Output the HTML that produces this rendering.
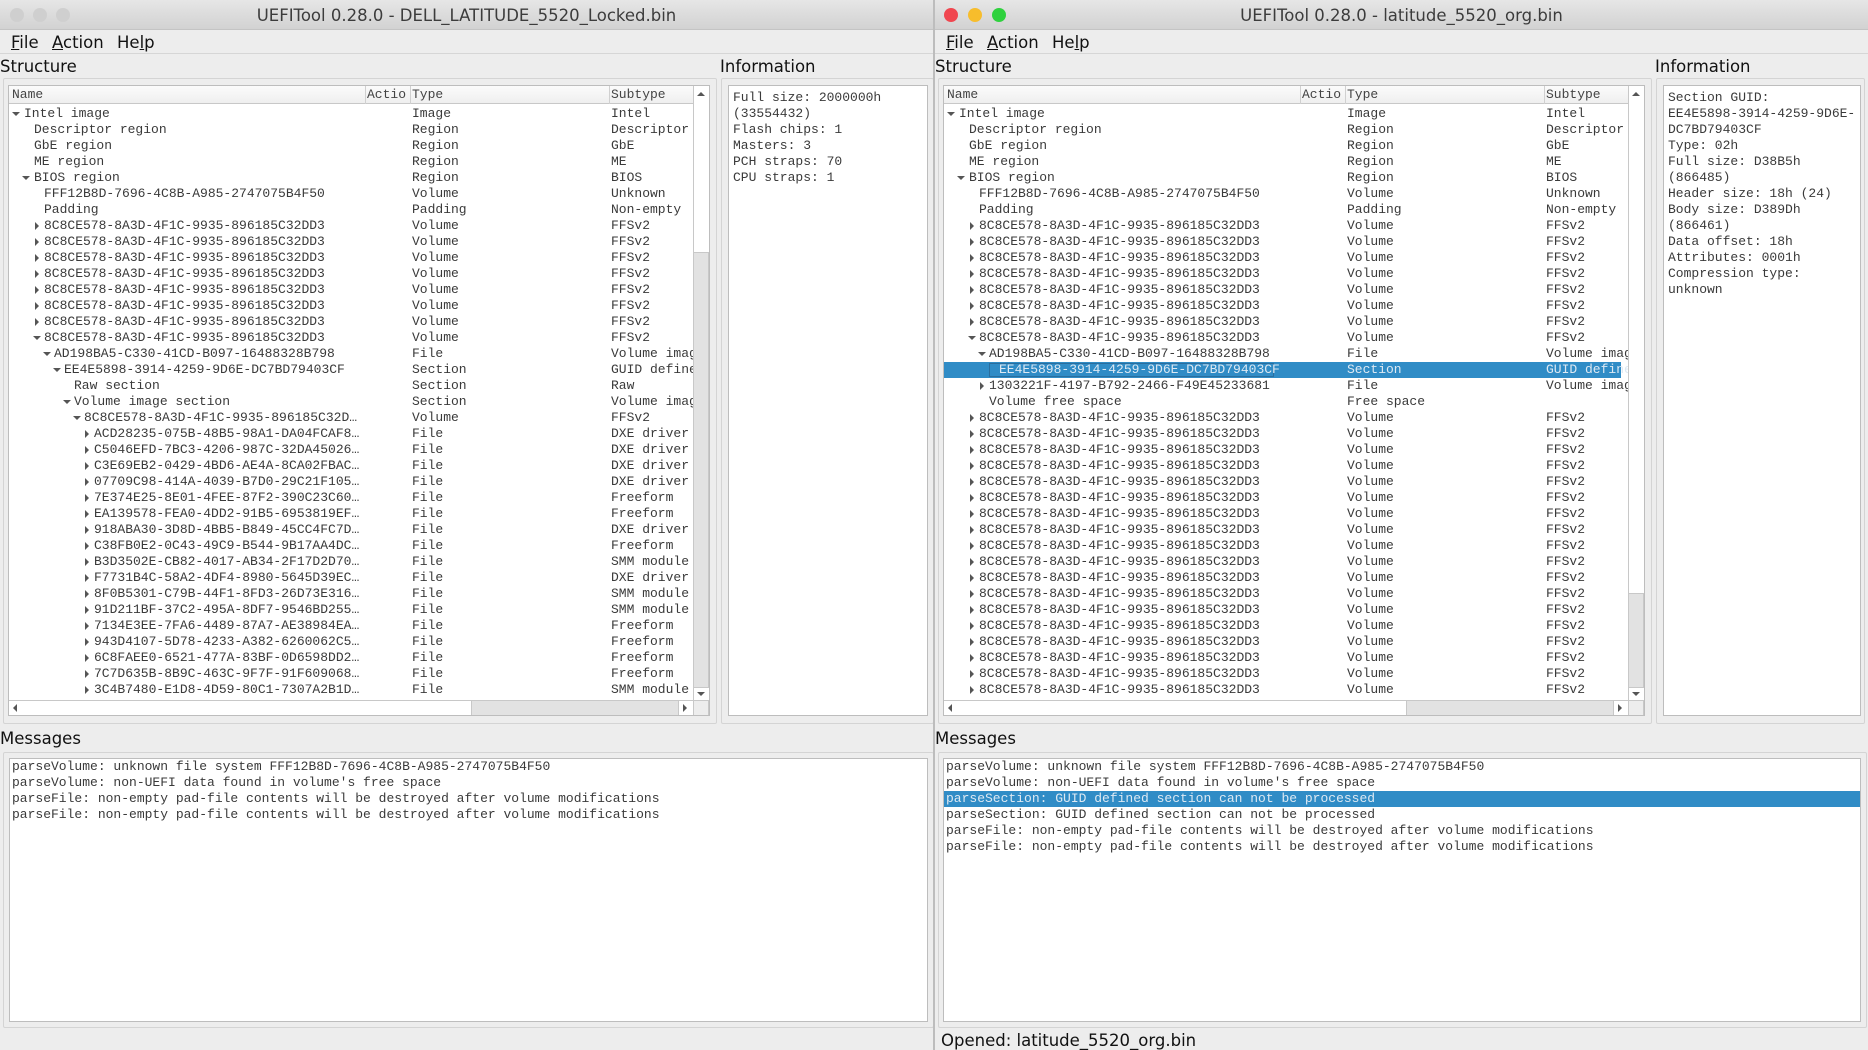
<!DOCTYPE html>
<html><head><meta charset="utf-8"><style>
*{margin:0;padding:0;box-sizing:border-box}
body{width:1868px;height:1050px;background:#ededed;position:relative;overflow:hidden;font-family:"DejaVu Sans","Liberation Sans",sans-serif;color:#111}
.win{position:absolute;top:0;width:933px;height:1050px;background:#ededed;overflow:hidden}
.tb{position:absolute;left:0;top:0;width:100%;height:30px;background:linear-gradient(#e6e6e6,#d2d2d2);border-bottom:1px solid #c4c4c4}
.tt{position:absolute;top:6px;width:100%;text-align:center;font-size:16.5px;color:#3c3c3c}
.dot{position:absolute;top:8px;width:14px;height:14px;border-radius:50%}
.mb{position:absolute;top:30px;left:0;width:100%;height:24px;border-bottom:1px solid #d6d6d6;font-size:16.5px}
.mb span{position:absolute;top:3px}
.lbl{position:absolute;font-size:16.5px;top:57px}
.frame{position:absolute;border:1px solid #d4d4d4;border-radius:2px}
.box{position:absolute;background:#fff;border:1px solid #bdbdbd;overflow:hidden;font-family:"Liberation Mono",monospace;font-size:13px;color:#3a3a3a}
.hd{position:absolute;left:0;top:0;height:18px;width:100%;background:linear-gradient(#fbfbfb,#efefef);border-bottom:1px solid #c8c8c8}
.hd span{position:absolute;top:1px;line-height:16px;color:#444}
.hs{position:absolute;top:0;width:1px;height:18px;background:#d0d0d0}
.r{position:absolute;left:0;height:16px;line-height:16px;white-space:pre;width:677px}
.r span{position:absolute;top:0}
.ar{position:absolute;top:4px;width:0;height:0;border-top:4px solid transparent;border-bottom:4px solid transparent;border-left:4px solid #555}
.ad{position:absolute;top:6px;width:0;height:0;border-left:4px solid transparent;border-right:4px solid transparent;border-top:4px solid #555}
.sel{background:#308cc6;color:#dde9f3}
.info{position:absolute;white-space:pre;line-height:16px}
.m{position:absolute;left:0;width:100%;height:16px;line-height:16px;white-space:pre;padding-left:2px}
</style></head><body>

<!-- LEFT WINDOW -->
<div class="win" style="left:0">
<div class="tb"><div class="dot" style="left:10px;background:#cfcfcf"></div><div class="dot" style="left:33px;background:#cfcfcf"></div><div class="dot" style="left:56px;background:#cfcfcf"></div>
<div class="tt">UEFITool 0.28.0 - DELL_LATITUDE_5520_Locked.bin</div></div>
<div class="mb"><span style="left:11px"><u>F</u>ile</span><span style="left:52px"><u>A</u>ction</span><span style="left:117px">He<u>l</u>p</span></div>
<div class="lbl" style="left:0">Structure</div>
<div class="lbl" style="left:720px">Information</div>
<div class="frame" style="left:3px;top:78px;width:714px;height:646px"></div>
<div class="frame" style="left:721px;top:78px;width:213px;height:646px"></div>
<div class="box" style="left:8px;top:85px;width:702px;height:631px">
<div class="hd"><span style="left:3px">Name</span><span style="left:358px">Actio</span><span style="left:403px">Type</span><span style="left:602px">Subtype</span>
<div class="hs" style="left:356px"></div><div class="hs" style="left:401px"></div><div class="hs" style="left:600px"></div></div>
<div class="r" style="top:20px"><i class="ad" style="left:3px"></i><span style="left:15px">Intel image</span><span style="left:403px">Image</span><span style="left:602px">Intel</span></div>
<div class="r" style="top:36px"><span style="left:25px">Descriptor region</span><span style="left:403px">Region</span><span style="left:602px">Descriptor</span></div>
<div class="r" style="top:52px"><span style="left:25px">GbE region</span><span style="left:403px">Region</span><span style="left:602px">GbE</span></div>
<div class="r" style="top:68px"><span style="left:25px">ME region</span><span style="left:403px">Region</span><span style="left:602px">ME</span></div>
<div class="r" style="top:84px"><i class="ad" style="left:13px"></i><span style="left:25px">BIOS region</span><span style="left:403px">Region</span><span style="left:602px">BIOS</span></div>
<div class="r" style="top:100px"><span style="left:35px">FFF12B8D-7696-4C8B-A985-2747075B4F50</span><span style="left:403px">Volume</span><span style="left:602px">Unknown</span></div>
<div class="r" style="top:116px"><span style="left:35px">Padding</span><span style="left:403px">Padding</span><span style="left:602px">Non-empty</span></div>
<div class="r" style="top:132px"><i class="ar" style="left:26px"></i><span style="left:35px">8C8CE578-8A3D-4F1C-9935-896185C32DD3</span><span style="left:403px">Volume</span><span style="left:602px">FFSv2</span></div>
<div class="r" style="top:148px"><i class="ar" style="left:26px"></i><span style="left:35px">8C8CE578-8A3D-4F1C-9935-896185C32DD3</span><span style="left:403px">Volume</span><span style="left:602px">FFSv2</span></div>
<div class="r" style="top:164px"><i class="ar" style="left:26px"></i><span style="left:35px">8C8CE578-8A3D-4F1C-9935-896185C32DD3</span><span style="left:403px">Volume</span><span style="left:602px">FFSv2</span></div>
<div class="r" style="top:180px"><i class="ar" style="left:26px"></i><span style="left:35px">8C8CE578-8A3D-4F1C-9935-896185C32DD3</span><span style="left:403px">Volume</span><span style="left:602px">FFSv2</span></div>
<div class="r" style="top:196px"><i class="ar" style="left:26px"></i><span style="left:35px">8C8CE578-8A3D-4F1C-9935-896185C32DD3</span><span style="left:403px">Volume</span><span style="left:602px">FFSv2</span></div>
<div class="r" style="top:212px"><i class="ar" style="left:26px"></i><span style="left:35px">8C8CE578-8A3D-4F1C-9935-896185C32DD3</span><span style="left:403px">Volume</span><span style="left:602px">FFSv2</span></div>
<div class="r" style="top:228px"><i class="ar" style="left:26px"></i><span style="left:35px">8C8CE578-8A3D-4F1C-9935-896185C32DD3</span><span style="left:403px">Volume</span><span style="left:602px">FFSv2</span></div>
<div class="r" style="top:244px"><i class="ad" style="left:24px"></i><span style="left:35px">8C8CE578-8A3D-4F1C-9935-896185C32DD3</span><span style="left:403px">Volume</span><span style="left:602px">FFSv2</span></div>
<div class="r" style="top:260px"><i class="ad" style="left:34px"></i><span style="left:45px">AD198BA5-C330-41CD-B097-16488328B798</span><span style="left:403px">File</span><span style="left:602px">Volume image</span></div>
<div class="r" style="top:276px"><i class="ad" style="left:44px"></i><span style="left:55px">EE4E5898-3914-4259-9D6E-DC7BD79403CF</span><span style="left:403px">Section</span><span style="left:602px">GUID defined</span></div>
<div class="r" style="top:292px"><span style="left:65px">Raw section</span><span style="left:403px">Section</span><span style="left:602px">Raw</span></div>
<div class="r" style="top:308px"><i class="ad" style="left:54px"></i><span style="left:65px">Volume image section</span><span style="left:403px">Section</span><span style="left:602px">Volume image</span></div>
<div class="r" style="top:324px"><i class="ad" style="left:64px"></i><span style="left:75px">8C8CE578-8A3D-4F1C-9935-896185C32D…</span><span style="left:403px">Volume</span><span style="left:602px">FFSv2</span></div>
<div class="r" style="top:340px"><i class="ar" style="left:76px"></i><span style="left:85px">ACD28235-075B-48B5-98A1-DA04FCAF8…</span><span style="left:403px">File</span><span style="left:602px">DXE driver</span></div>
<div class="r" style="top:356px"><i class="ar" style="left:76px"></i><span style="left:85px">C5046EFD-7BC3-4206-987C-32DA45026…</span><span style="left:403px">File</span><span style="left:602px">DXE driver</span></div>
<div class="r" style="top:372px"><i class="ar" style="left:76px"></i><span style="left:85px">C3E69EB2-0429-4BD6-AE4A-8CA02FBAC…</span><span style="left:403px">File</span><span style="left:602px">DXE driver</span></div>
<div class="r" style="top:388px"><i class="ar" style="left:76px"></i><span style="left:85px">07709C98-414A-4039-B7D0-29C21F105…</span><span style="left:403px">File</span><span style="left:602px">DXE driver</span></div>
<div class="r" style="top:404px"><i class="ar" style="left:76px"></i><span style="left:85px">7E374E25-8E01-4FEE-87F2-390C23C60…</span><span style="left:403px">File</span><span style="left:602px">Freeform</span></div>
<div class="r" style="top:420px"><i class="ar" style="left:76px"></i><span style="left:85px">EA139578-FEA0-4DD2-91B5-6953819EF…</span><span style="left:403px">File</span><span style="left:602px">Freeform</span></div>
<div class="r" style="top:436px"><i class="ar" style="left:76px"></i><span style="left:85px">918ABA30-3D8D-4BB5-B849-45CC4FC7D…</span><span style="left:403px">File</span><span style="left:602px">DXE driver</span></div>
<div class="r" style="top:452px"><i class="ar" style="left:76px"></i><span style="left:85px">C38FB0E2-0C43-49C9-B544-9B17AA4DC…</span><span style="left:403px">File</span><span style="left:602px">Freeform</span></div>
<div class="r" style="top:468px"><i class="ar" style="left:76px"></i><span style="left:85px">B3D3502E-CB82-4017-AB34-2F17D2D70…</span><span style="left:403px">File</span><span style="left:602px">SMM module</span></div>
<div class="r" style="top:484px"><i class="ar" style="left:76px"></i><span style="left:85px">F7731B4C-58A2-4DF4-8980-5645D39EC…</span><span style="left:403px">File</span><span style="left:602px">DXE driver</span></div>
<div class="r" style="top:500px"><i class="ar" style="left:76px"></i><span style="left:85px">8F0B5301-C79B-44F1-8FD3-26D73E316…</span><span style="left:403px">File</span><span style="left:602px">SMM module</span></div>
<div class="r" style="top:516px"><i class="ar" style="left:76px"></i><span style="left:85px">91D211BF-37C2-495A-8DF7-9546BD255…</span><span style="left:403px">File</span><span style="left:602px">SMM module</span></div>
<div class="r" style="top:532px"><i class="ar" style="left:76px"></i><span style="left:85px">7134E3EE-7FA6-4489-87A7-AE38984EA…</span><span style="left:403px">File</span><span style="left:602px">Freeform</span></div>
<div class="r" style="top:548px"><i class="ar" style="left:76px"></i><span style="left:85px">943D4107-5D78-4233-A382-6260062C5…</span><span style="left:403px">File</span><span style="left:602px">Freeform</span></div>
<div class="r" style="top:564px"><i class="ar" style="left:76px"></i><span style="left:85px">6C8FAEE0-6521-477A-83BF-0D6598DD2…</span><span style="left:403px">File</span><span style="left:602px">Freeform</span></div>
<div class="r" style="top:580px"><i class="ar" style="left:76px"></i><span style="left:85px">7C7D635B-8B9C-463C-9F7F-91F609068…</span><span style="left:403px">File</span><span style="left:602px">Freeform</span></div>
<div class="r" style="top:596px"><i class="ar" style="left:76px"></i><span style="left:85px">3C4B7480-E1D8-4D59-80C1-7307A2B1D…</span><span style="left:403px">File</span><span style="left:602px">SMM module</span></div>
<div style="position:absolute;left:684px;top:0;width:16px;height:614px;background:#fff;border-left:1px solid #c8c8c8"></div>
<div style="position:absolute;left:684px;top:166px;width:16px;height:436px;background:#e2e2e2;border:1px solid #c8c8c8"></div>
<div style="position:absolute;left:688px;top:6px;border-left:4px solid transparent;border-right:4px solid transparent;border-bottom:4px solid #555"></div>
<div style="position:absolute;left:688px;top:606px;border-left:4px solid transparent;border-right:4px solid transparent;border-top:4px solid #555"></div>
<div style="position:absolute;left:0;top:614px;width:700px;height:16px;background:#fff;border-top:1px solid #c8c8c8"></div>
<div style="position:absolute;left:462px;top:614px;width:208px;height:16px;background:#e2e2e2;border:1px solid #c8c8c8"></div>
<div style="position:absolute;left:684px;top:614px;width:16px;height:16px;background:#ededed;border:1px solid #c8c8c8"></div>
<div style="position:absolute;left:4px;top:618px;border-top:4px solid transparent;border-bottom:4px solid transparent;border-right:4px solid #555"></div>
<div style="position:absolute;left:674px;top:618px;border-top:4px solid transparent;border-bottom:4px solid transparent;border-left:4px solid #555"></div>
</div>
<div class="box" style="left:728px;top:85px;width:200px;height:631px">
<div class="info" style="left:4px;top:4px">Full size: 2000000h
(33554432)
Flash chips: 1
Masters: 3
PCH straps: 70
CPU straps: 1</div></div>
<div class="lbl" style="left:0;top:729px">Messages</div>
<div class="frame" style="left:3px;top:752px;width:931px;height:276px"></div>
<div class="box" style="left:9px;top:758px;width:919px;height:264px">
<div class="m" style="top:0">parseVolume: unknown file system FFF12B8D-7696-4C8B-A985-2747075B4F50</div>
<div class="m" style="top:16px">parseVolume: non-UEFI data found in volume's free space</div>
<div class="m" style="top:32px">parseFile: non-empty pad-file contents will be destroyed after volume modifications</div>
<div class="m" style="top:48px">parseFile: non-empty pad-file contents will be destroyed after volume modifications</div>
</div>
</div>
<div style="position:absolute;left:933px;top:0;width:2px;height:1050px;background:#bdbdbd"></div>

<!-- RIGHT WINDOW -->
<div class="win" style="left:935px">
<div class="tb"><div class="dot" style="left:9px;background:#f0464f"></div><div class="dot" style="left:33px;background:#f7bd2c"></div><div class="dot" style="left:57px;background:#2fd13e"></div>
<div class="tt">UEFITool 0.28.0 - latitude_5520_org.bin</div></div>
<div class="mb"><span style="left:11px"><u>F</u>ile</span><span style="left:52px"><u>A</u>ction</span><span style="left:117px">He<u>l</u>p</span></div>
<div class="lbl" style="left:0">Structure</div>
<div class="lbl" style="left:720px">Information</div>
<div class="frame" style="left:3px;top:78px;width:714px;height:646px"></div>
<div class="frame" style="left:721px;top:78px;width:209px;height:646px"></div>
<div class="box" style="left:8px;top:85px;width:702px;height:631px">
<div class="hd"><span style="left:3px">Name</span><span style="left:358px">Actio</span><span style="left:403px">Type</span><span style="left:602px">Subtype</span>
<div class="hs" style="left:356px"></div><div class="hs" style="left:401px"></div><div class="hs" style="left:600px"></div></div>
<div class="r" style="top:20px"><i class="ad" style="left:3px"></i><span style="left:15px">Intel image</span><span style="left:403px">Image</span><span style="left:602px">Intel</span></div>
<div class="r" style="top:36px"><span style="left:25px">Descriptor region</span><span style="left:403px">Region</span><span style="left:602px">Descriptor</span></div>
<div class="r" style="top:52px"><span style="left:25px">GbE region</span><span style="left:403px">Region</span><span style="left:602px">GbE</span></div>
<div class="r" style="top:68px"><span style="left:25px">ME region</span><span style="left:403px">Region</span><span style="left:602px">ME</span></div>
<div class="r" style="top:84px"><i class="ad" style="left:13px"></i><span style="left:25px">BIOS region</span><span style="left:403px">Region</span><span style="left:602px">BIOS</span></div>
<div class="r" style="top:100px"><span style="left:35px">FFF12B8D-7696-4C8B-A985-2747075B4F50</span><span style="left:403px">Volume</span><span style="left:602px">Unknown</span></div>
<div class="r" style="top:116px"><span style="left:35px">Padding</span><span style="left:403px">Padding</span><span style="left:602px">Non-empty</span></div>
<div class="r" style="top:132px"><i class="ar" style="left:26px"></i><span style="left:35px">8C8CE578-8A3D-4F1C-9935-896185C32DD3</span><span style="left:403px">Volume</span><span style="left:602px">FFSv2</span></div>
<div class="r" style="top:148px"><i class="ar" style="left:26px"></i><span style="left:35px">8C8CE578-8A3D-4F1C-9935-896185C32DD3</span><span style="left:403px">Volume</span><span style="left:602px">FFSv2</span></div>
<div class="r" style="top:164px"><i class="ar" style="left:26px"></i><span style="left:35px">8C8CE578-8A3D-4F1C-9935-896185C32DD3</span><span style="left:403px">Volume</span><span style="left:602px">FFSv2</span></div>
<div class="r" style="top:180px"><i class="ar" style="left:26px"></i><span style="left:35px">8C8CE578-8A3D-4F1C-9935-896185C32DD3</span><span style="left:403px">Volume</span><span style="left:602px">FFSv2</span></div>
<div class="r" style="top:196px"><i class="ar" style="left:26px"></i><span style="left:35px">8C8CE578-8A3D-4F1C-9935-896185C32DD3</span><span style="left:403px">Volume</span><span style="left:602px">FFSv2</span></div>
<div class="r" style="top:212px"><i class="ar" style="left:26px"></i><span style="left:35px">8C8CE578-8A3D-4F1C-9935-896185C32DD3</span><span style="left:403px">Volume</span><span style="left:602px">FFSv2</span></div>
<div class="r" style="top:228px"><i class="ar" style="left:26px"></i><span style="left:35px">8C8CE578-8A3D-4F1C-9935-896185C32DD3</span><span style="left:403px">Volume</span><span style="left:602px">FFSv2</span></div>
<div class="r" style="top:244px"><i class="ad" style="left:24px"></i><span style="left:35px">8C8CE578-8A3D-4F1C-9935-896185C32DD3</span><span style="left:403px">Volume</span><span style="left:602px">FFSv2</span></div>
<div class="r" style="top:260px"><i class="ad" style="left:34px"></i><span style="left:45px">AD198BA5-C330-41CD-B097-16488328B798</span><span style="left:403px">File</span><span style="left:602px">Volume image</span></div>
<div class="r sel" style="top:276px"><span style="left:45px;top:1px;height:14px;width:285px;border:1px solid #2a6e9e"></span><span style="left:55px">EE4E5898-3914-4259-9D6E-DC7BD79403CF</span><span style="left:403px">Section</span><span style="left:602px">GUID defined</span></div>
<div class="r" style="top:292px"><i class="ar" style="left:36px"></i><span style="left:45px">1303221F-4197-B792-2466-F49E45233681</span><span style="left:403px">File</span><span style="left:602px">Volume image</span></div>
<div class="r" style="top:308px"><span style="left:45px">Volume free space</span><span style="left:403px">Free space</span></div>
<div class="r" style="top:324px"><i class="ar" style="left:26px"></i><span style="left:35px">8C8CE578-8A3D-4F1C-9935-896185C32DD3</span><span style="left:403px">Volume</span><span style="left:602px">FFSv2</span></div>
<div class="r" style="top:340px"><i class="ar" style="left:26px"></i><span style="left:35px">8C8CE578-8A3D-4F1C-9935-896185C32DD3</span><span style="left:403px">Volume</span><span style="left:602px">FFSv2</span></div>
<div class="r" style="top:356px"><i class="ar" style="left:26px"></i><span style="left:35px">8C8CE578-8A3D-4F1C-9935-896185C32DD3</span><span style="left:403px">Volume</span><span style="left:602px">FFSv2</span></div>
<div class="r" style="top:372px"><i class="ar" style="left:26px"></i><span style="left:35px">8C8CE578-8A3D-4F1C-9935-896185C32DD3</span><span style="left:403px">Volume</span><span style="left:602px">FFSv2</span></div>
<div class="r" style="top:388px"><i class="ar" style="left:26px"></i><span style="left:35px">8C8CE578-8A3D-4F1C-9935-896185C32DD3</span><span style="left:403px">Volume</span><span style="left:602px">FFSv2</span></div>
<div class="r" style="top:404px"><i class="ar" style="left:26px"></i><span style="left:35px">8C8CE578-8A3D-4F1C-9935-896185C32DD3</span><span style="left:403px">Volume</span><span style="left:602px">FFSv2</span></div>
<div class="r" style="top:420px"><i class="ar" style="left:26px"></i><span style="left:35px">8C8CE578-8A3D-4F1C-9935-896185C32DD3</span><span style="left:403px">Volume</span><span style="left:602px">FFSv2</span></div>
<div class="r" style="top:436px"><i class="ar" style="left:26px"></i><span style="left:35px">8C8CE578-8A3D-4F1C-9935-896185C32DD3</span><span style="left:403px">Volume</span><span style="left:602px">FFSv2</span></div>
<div class="r" style="top:452px"><i class="ar" style="left:26px"></i><span style="left:35px">8C8CE578-8A3D-4F1C-9935-896185C32DD3</span><span style="left:403px">Volume</span><span style="left:602px">FFSv2</span></div>
<div class="r" style="top:468px"><i class="ar" style="left:26px"></i><span style="left:35px">8C8CE578-8A3D-4F1C-9935-896185C32DD3</span><span style="left:403px">Volume</span><span style="left:602px">FFSv2</span></div>
<div class="r" style="top:484px"><i class="ar" style="left:26px"></i><span style="left:35px">8C8CE578-8A3D-4F1C-9935-896185C32DD3</span><span style="left:403px">Volume</span><span style="left:602px">FFSv2</span></div>
<div class="r" style="top:500px"><i class="ar" style="left:26px"></i><span style="left:35px">8C8CE578-8A3D-4F1C-9935-896185C32DD3</span><span style="left:403px">Volume</span><span style="left:602px">FFSv2</span></div>
<div class="r" style="top:516px"><i class="ar" style="left:26px"></i><span style="left:35px">8C8CE578-8A3D-4F1C-9935-896185C32DD3</span><span style="left:403px">Volume</span><span style="left:602px">FFSv2</span></div>
<div class="r" style="top:532px"><i class="ar" style="left:26px"></i><span style="left:35px">8C8CE578-8A3D-4F1C-9935-896185C32DD3</span><span style="left:403px">Volume</span><span style="left:602px">FFSv2</span></div>
<div class="r" style="top:548px"><i class="ar" style="left:26px"></i><span style="left:35px">8C8CE578-8A3D-4F1C-9935-896185C32DD3</span><span style="left:403px">Volume</span><span style="left:602px">FFSv2</span></div>
<div class="r" style="top:564px"><i class="ar" style="left:26px"></i><span style="left:35px">8C8CE578-8A3D-4F1C-9935-896185C32DD3</span><span style="left:403px">Volume</span><span style="left:602px">FFSv2</span></div>
<div class="r" style="top:580px"><i class="ar" style="left:26px"></i><span style="left:35px">8C8CE578-8A3D-4F1C-9935-896185C32DD3</span><span style="left:403px">Volume</span><span style="left:602px">FFSv2</span></div>
<div class="r" style="top:596px"><i class="ar" style="left:26px"></i><span style="left:35px">8C8CE578-8A3D-4F1C-9935-896185C32DD3</span><span style="left:403px">Volume</span><span style="left:602px">FFSv2</span></div>
<div style="position:absolute;left:684px;top:0;width:16px;height:614px;background:#fff;border-left:1px solid #c8c8c8"></div>
<div style="position:absolute;left:684px;top:507px;width:16px;height:95px;background:#e2e2e2;border:1px solid #c8c8c8"></div>
<div style="position:absolute;left:688px;top:6px;border-left:4px solid transparent;border-right:4px solid transparent;border-bottom:4px solid #555"></div>
<div style="position:absolute;left:688px;top:606px;border-left:4px solid transparent;border-right:4px solid transparent;border-top:4px solid #555"></div>
<div style="position:absolute;left:0;top:614px;width:700px;height:16px;background:#fff;border-top:1px solid #c8c8c8"></div>
<div style="position:absolute;left:462px;top:614px;width:208px;height:16px;background:#e2e2e2;border:1px solid #c8c8c8"></div>
<div style="position:absolute;left:684px;top:614px;width:16px;height:16px;background:#ededed;border:1px solid #c8c8c8"></div>
<div style="position:absolute;left:4px;top:618px;border-top:4px solid transparent;border-bottom:4px solid transparent;border-right:4px solid #555"></div>
<div style="position:absolute;left:674px;top:618px;border-top:4px solid transparent;border-bottom:4px solid transparent;border-left:4px solid #555"></div>
</div>
<div class="box" style="left:728px;top:85px;width:198px;height:631px">
<div class="info" style="left:4px;top:4px">Section GUID:
EE4E5898-3914-4259-9D6E-
DC7BD79403CF
Type: 02h
Full size: D38B5h
(866485)
Header size: 18h (24)
Body size: D389Dh
(866461)
Data offset: 18h
Attributes: 0001h
Compression type:
unknown</div></div>
<div class="lbl" style="left:0;top:729px">Messages</div>
<div class="frame" style="left:3px;top:752px;width:929px;height:276px"></div>
<div class="box" style="left:8px;top:758px;width:918px;height:264px">
<div class="m" style="top:0">parseVolume: unknown file system FFF12B8D-7696-4C8B-A985-2747075B4F50</div>
<div class="m" style="top:16px">parseVolume: non-UEFI data found in volume's free space</div>
<div class="m sel" style="top:32px">parseSection: GUID defined section can not be processed</div>
<div class="m" style="top:48px">parseSection: GUID defined section can not be processed</div>
<div class="m" style="top:64px">parseFile: non-empty pad-file contents will be destroyed after volume modifications</div>
<div class="m" style="top:80px">parseFile: non-empty pad-file contents will be destroyed after volume modifications</div>
</div>
<div style="position:absolute;left:6px;top:1031px;font-size:16.5px;color:#111">Opened: latitude_5520_org.bin</div>
</div>
</body></html>
